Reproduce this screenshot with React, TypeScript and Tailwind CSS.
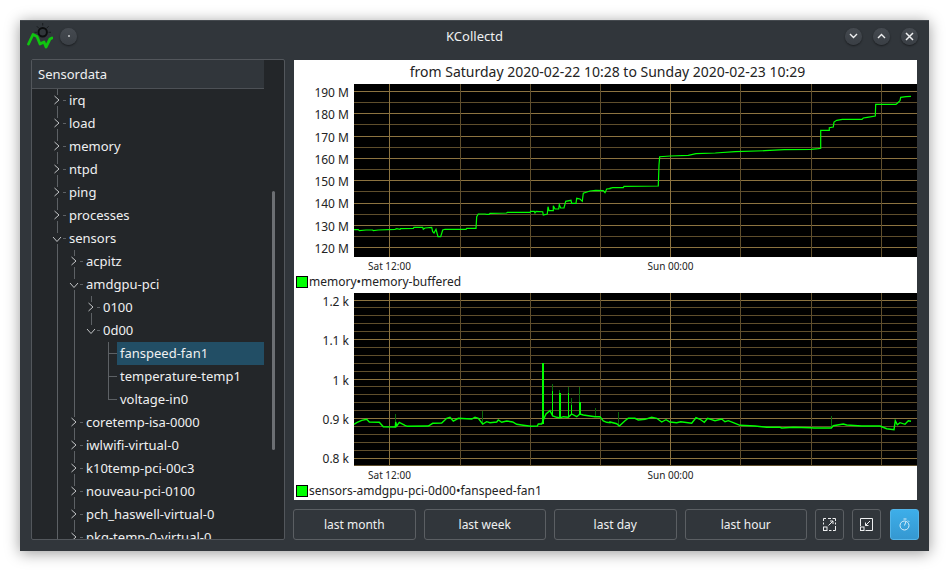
import React from "react";

const pts = (x0: number, y0: number, s: string) =>
  s.trim().split(/\s+/).map((p) => {
    const [a, b] = p.split(",").map(Number);
    return `${(x0 + a / 3).toFixed(1)},${(y0 + b / 3).toFixed(1)}`;
  }).join(" ");

const mem =
  pts(-4, -24, "192,509 205,509 208,512 228,510 248,510 250,512 265,510 315,508 320,506 330,508 332,506 370,505 372,502 398,502 400,508 405,504 425,502 428,515 432,519 438,508 444,530 452,530 458,510 465,508 528,508 530,505 558,505 560,470 565,462 585,462 590,463 597,463 600,460 650,459 652,457 720,457 722,454 733,454 735,459 738,454 758,455 760,465 772,462 774,440 777,452 790,452 790,437 795,447 806,447 808,434 812,444 822,444 827,424 843,421 845,430 858,430 860,415 870,417 877,424 880,400 900,393 917,391 940,392 945,398 950,387 960,386") +
  " " +
  pts(316, -24, "0,385 8,383 40,383 42,379 145,378 147,315 149,290 181,288 235,286 258,281 316,279 376,275 465,272 523,269 604,268 625,266 632,265 632,211 658,211 658,203 670,201 672,186 680,181 697,178 756,178 760,174 772,172 796,168 797,133 858,133 862,130 870,122 872,112 888,110 903,109");

const fan =
  pts(-4, -3, "192,403 200,398 215,391 230,388 238,396 268,397 280,410 316,411 317,396 320,408 328,397 345,406 352,409 415,408 428,400 455,399 470,385 480,382 490,393 505,385 530,386 545,387 555,382 565,385 578,402 590,395 600,398 620,396 625,390 635,397 650,393 668,396 680,403 700,406 722,409 742,408 745,402 755,402 760,390 768,372 780,362 788,378 800,382 810,384 820,380 835,382 845,372 860,380 870,372 880,375 915,380 930,380 940,393 950,397 960,398") +
  " " +
  pts(316, -3, "0,396 20,401 28,408 45,392 55,385 75,385 85,390 105,388 125,382 140,385 155,396 168,389 180,396 200,398 212,395 245,400 258,383 270,388 283,397 293,385 315,392 335,387 345,395 355,392 370,398 390,406 435,408 470,412 510,412 515,414 550,412 600,413 612,414 664,414 670,407 700,402 710,405 755,408 810,408 830,416 852,419 856,392 862,404 870,398 885,403 895,392 903,394");

const vLines: [number, boolean][] = [
  [95.5, true], [166.5, false], [236.5, false], [306.5, false], [376.5, true], [446.5, false], [517.5, false], [587.5, false],
];

const MAJOR = "#8c7340";
const MINOR = "#5f4e2c";

const brightSpikes: [number, number, number, number][] = [
  [759, 218, 402, 2], [787, 302, 378, 1], [809, 308, 382, 2], [835, 308, 380, 1], [844, 345, 372, 1], [870, 337, 375, 2],
];
const darkSpikes: [number, number, number][] = [
  [316, 372, 396], [577, 362, 402], [787, 282, 302], [809, 300, 308], [835, 290, 308], [844, 323, 345], [868, 290, 337], [916, 354, 380],
];
const darkSpikes2: [number, number, number][] = [[25, 366, 405], [664, 378, 414]];

function Chart({ hLines, bottom, plotH, yLabels, trace, spikes, labelY, traceWidth }: {
  hLines: [number, boolean][];
  bottom?: boolean;
  plotH: number;
  yLabels: [string, number][];
  trace: string;
  spikes?: React.ReactNode;
  labelY: number;
  traceWidth: number;
}) {
  return (
    <svg width="623" height="191" viewBox="0 0 623 191" className="block shrink-0">
      <rect x="60" y="0" width="563" height={plotH} fill="#000" />
      <g shapeRendering="crispEdges" strokeWidth="1">
        {hLines.map(([y, major], i) => (
          <line key={i} x1="60" x2="623" y1={y} y2={y} stroke={major ? MAJOR : MINOR} />
        ))}
        {vLines.map(([x, major], i) => (
          <line key={i} x1={x} x2={x} y1="0" y2={plotH} stroke={major ? MAJOR : MINOR} />
        ))}
        {bottom && <line x1="60" x2="623" y1={plotH - 0.5} y2={plotH - 0.5} stroke={MINOR} />}
      </g>
      {spikes}
      <polyline points={trace} fill="none" stroke="#00ff00" strokeWidth={traceWidth} strokeLinejoin="miter" />
      <g fill="#232323" fontSize="12" textAnchor="end">
        {yLabels.map(([t, y]) => (
          <text key={t} x="55" y={y}>{t}</text>
        ))}
      </g>
      <g fill="#232323" fontSize="10" textAnchor="middle">
        <text x="95.5" y={labelY}>Sat 12:00</text>
        <text x="376.5" y={labelY}>Sun 00:00</text>
      </g>
    </svg>
  );
}

const memH: [number, boolean][] = [];
for (let i = 0; i < 8; i++) {
  memH.push([Math.floor(7.5 + 22.3 * i) + 0.5, true]);
  if (i < 7) memH.push([Math.floor(18.6 + 22.3 * i) + 0.5, false]);
}
const fanH: [number, boolean][] = [];
for (let i = 0; i <= 20; i++) {
  fanH.push([Math.floor(7 + 7.9 * i) + 0.5, i % 5 === 0]);
}

function FanSpikes() {
  return (
    <g shapeRendering="crispEdges">
      {darkSpikes.map(([x, a, b], i) => (
        <line key={i} x1={-4 + x / 3} x2={-4 + x / 3} y1={-3 + a / 3} y2={-3 + b / 3} stroke="#0a6a0a" />
      ))}
      {darkSpikes2.map(([x, a, b], i) => (
        <line key={i} x1={316 + x / 3} x2={316 + x / 3} y1={-3 + a / 3} y2={-3 + b / 3} stroke="#0a6a0a" />
      ))}
      {brightSpikes.map(([x, a, b, w], i) => (
        <line key={i} x1={-4 + x / 3} x2={-4 + x / 3} y1={-3 + a / 3} y2={-3 + b / 3} stroke="#00ff00" strokeWidth={w} />
      ))}
    </g>
  );
}

function Legend({ text, h }: { text: string; h: string }) {
  return (
    <div className={`flex items-start pl-[2px] shrink-0 ${h}`}>
      <span className="w-[12px] h-[12px] mt-px bg-[#00ff00] border border-black shrink-0" />
      <span className="ml-px text-[12px] leading-[14px] text-[#232323] whitespace-nowrap">{text}</span>
    </div>
  );
}

type Kind = "closed" | "open" | "leaf" | "last";

const LINE = "bg-[#5d6165]";

function Row({ label, guides, kind, selected }: { label: string; guides: boolean[]; kind: Kind; selected?: boolean }) {
  const isFolder = kind === "closed" || kind === "open";
  return (
    <div className="flex h-[23px] shrink-0 w-[232px]">
      <div className="w-[17px] shrink-0" />
      {guides.map((g, i) => (
        <div key={i} className="w-[17px] shrink-0 flex justify-center">
          {g && <div className={`w-px h-full ${LINE}`} />}
        </div>
      ))}
      <div className="w-[17px] shrink-0 relative">
        {isFolder ? (
          <>
            <div className={`absolute left-[8px] top-0 w-px h-[6px] ${LINE}`} />
            {(kind === "closed" || label === "sensors" || label === "amdgpu-pci") && (
              <div className={`absolute left-[8px] bottom-0 w-px h-[6px] ${LINE}`} />
            )}
            <div className={`absolute left-[14px] top-[11px] w-[3px] h-px ${LINE}`} />
            {kind === "closed" ? (
              <svg width="8" height="10" viewBox="0 0 8 10" className="absolute left-[4px] top-[6px]">
                <path d="M1.5 1 L6 5 L1.5 9" fill="none" stroke="#c4c6c8" strokeWidth="1" />
              </svg>
            ) : (
              <svg width="10" height="7" viewBox="0 0 10 7" className="absolute left-[3px] top-[9px]">
                <path d="M1 1 L5 5.5 L9 1" fill="none" stroke="#c4c6c8" strokeWidth="1" />
              </svg>
            )}
          </>
        ) : (
          <>
            <div className={`absolute left-[8px] top-0 w-px ${kind === "last" ? "h-[12px]" : "h-full"} ${LINE}`} />
            <div className={`absolute left-[8px] top-[11px] w-[9px] h-px ${LINE}`} />
          </>
        )}
      </div>
      <div className={`flex-1 min-w-0 pl-[3px] flex items-center text-[13px] text-[#eff0f1] whitespace-nowrap ${selected ? "bg-[#224e65]" : ""}`}>
        {label}
      </div>
    </div>
  );
}

function RoundBtn({ children }: { children: React.ReactNode }) {
  return (
    <div className="w-[17px] h-[17px] rounded-full bg-gradient-to-b from-[#454a50] to-[#3a3f45] shadow-[0_1px_2px_rgba(0,0,0,0.5)] flex items-center justify-center">
      {children}
    </div>
  );
}

function TextBtn({ label }: { label: string }) {
  return (
    <div className="flex-1 h-[31px] pt-px rounded-[3px] border border-[#5b5f63] flex items-center justify-center text-[12px] text-[#eff0f1]">
      {label}
    </div>
  );
}

function IconBtn({ children, active }: { children: React.ReactNode; active?: boolean }) {
  return (
    <div className={`w-[29px] h-[31px] shrink-0 rounded-[3px] border flex items-center justify-center ${active ? "ml-px border-[#53b4e8] bg-gradient-to-b from-[#3daee9] to-[#3598d1]" : "border-[#5b5f63]"}`}>
      {children}
    </div>
  );
}

export default function App() {
  return (
    <div className="w-[949px] h-[571px] bg-white pl-5 pt-5 overflow-hidden font-['Noto_Sans',sans-serif]">
      <div className="w-[909px] h-[531px] bg-[#31363b] border-t border-[#454a4f] shadow-[0_2px_14px_rgba(0,0,0,0.4)] flex flex-col">
        <div className="h-[30px] mb-[8px] shrink-0 flex items-center pl-[7px] pr-[11px]">
          <svg width="26" height="26" viewBox="0 0 26 26" className="shrink-0">
            <g stroke="#17191b" strokeWidth="1" opacity="0.85">
              <path d="M15.7 0v2.5M7.5 9.3h2.5M21.5 9.3h2.5M9.8 3.2l2 2M21.7 3.2l-2 2" />
            </g>
            <circle cx="15.7" cy="9.3" r="4.2" fill="none" stroke="#0c0d0e" strokeWidth="2" />
            <path d="M1.5 21 L6 11.5 L10 13.5 L13 21 L17 19 L19 24 L23 16 L25 15" fill="none" stroke="#10c410" strokeWidth="2.8" strokeLinejoin="round" strokeLinecap="round" />
          </svg>
          <div className="ml-[7px]">
            <RoundBtn>
              <div className="w-[2px] h-[2px] bg-[#a5a8ab]" />
            </RoundBtn>
          </div>
          <div className="flex-1 pt-px text-center text-[13px] text-[#eff0f1] pl-[27px]">KCollectd</div>
          <div className="flex gap-[11px]">
            <RoundBtn>
              <svg width="9" height="6" viewBox="0 0 9 6"><path d="M1 1 L4.5 4.5 L8 1" fill="none" stroke="#eff0f1" strokeWidth="1.4" /></svg>
            </RoundBtn>
            <RoundBtn>
              <svg width="9" height="6" viewBox="0 0 9 6"><path d="M1 5 L4.5 1.5 L8 5" fill="none" stroke="#eff0f1" strokeWidth="1.4" /></svg>
            </RoundBtn>
            <RoundBtn>
              <svg width="9" height="9" viewBox="0 0 9 9"><path d="M1 1 L8 8 M8 1 L1 8" fill="none" stroke="#eff0f1" strokeWidth="1.5" /></svg>
            </RoundBtn>
          </div>
        </div>

        <div className="flex pl-[11px] pr-[10px] h-[482px]">
          <div className="w-[254px] h-[481px] shrink-0 rounded-[2px] border border-[#53575c] bg-[#232629] overflow-hidden relative">
            <div className="w-[232px] h-[29px] pt-px bg-[#31363b] border-b border-[#4d5156] flex items-center pl-[6px] text-[13px] text-[#eff0f1]">
              Sensordata
            </div>
            <div className="flex flex-col">
              <Row label="irq" guides={[]} kind="closed" />
              <Row label="load" guides={[]} kind="closed" />
              <Row label="memory" guides={[]} kind="closed" />
              <Row label="ntpd" guides={[]} kind="closed" />
              <Row label="ping" guides={[]} kind="closed" />
              <Row label="processes" guides={[]} kind="closed" />
              <Row label="sensors" guides={[]} kind="open" />
              <Row label="acpitz" guides={[true]} kind="closed" />
              <Row label="amdgpu-pci" guides={[true]} kind="open" />
              <Row label="0100" guides={[true, true]} kind="closed" />
              <Row label="0d00" guides={[true, true]} kind="open" />
              <Row label="fanspeed-fan1" guides={[true, true, false]} kind="leaf" selected />
              <Row label="temperature-temp1" guides={[true, true, false]} kind="leaf" />
              <Row label="voltage-in0" guides={[true, true, false]} kind="last" />
              <Row label="coretemp-isa-0000" guides={[true]} kind="closed" />
              <Row label="iwlwifi-virtual-0" guides={[true]} kind="closed" />
              <Row label="k10temp-pci-00c3" guides={[true]} kind="closed" />
              <Row label="nouveau-pci-0100" guides={[true]} kind="closed" />
              <Row label="pch_haswell-virtual-0" guides={[true]} kind="closed" />
              <Row label="pkg-temp-0-virtual-0" guides={[true]} kind="closed" />
            </div>
            <div className="absolute left-[240px] top-[131px] w-[3px] h-[259px] rounded-full bg-[#6c6f73]" />
          </div>

          <div className="ml-[8px] flex-1 min-w-0 flex flex-col">
            <div className="ml-px w-[623px] h-[440px] bg-white mt-px flex flex-col">
              <div className="h-[24px] pb-[2px] pl-[4px] shrink-0 flex items-center justify-center text-[14px] text-[#232323] whitespace-nowrap">
                from Saturday 2020-02-22 10:28 to Sunday 2020-02-23 10:29
              </div>
              <Chart
                hLines={memH}
                plotH={173}
                labelY={186}
                trace={mem}
                traceWidth={1.2}
                yLabels={[["190 M", 13], ["180 M", 35], ["170 M", 58], ["160 M", 80], ["150 M", 102], ["140 M", 124], ["130 M", 147], ["120 M", 169]]}
              />
              <Legend text="memory•memory-buffered" h="h-[18px]" />
              <Chart
                hLines={fanH}
                bottom
                plotH={173}
                labelY={186}
                trace={fan}
                traceWidth={1.4}
                spikes={<FanSpikes />}
                yLabels={[["1.2 k", 13], ["1.1 k", 52], ["1 k", 92], ["0.9 k", 131], ["0.8 k", 170]]}
              />
              <Legend text="sensors-amdgpu-pci-0d00•fanspeed-fan1" h="h-[16px]" />
            </div>
            <div className="mt-[9px] flex items-center gap-2">
              <div className="flex-1 flex gap-2">
                <TextBtn label="last month" />
                <TextBtn label="last week" />
                <TextBtn label="last day" />
                <TextBtn label="last hour" />
              </div>
              <IconBtn>
                <svg width="13" height="13" viewBox="0 0 13 13" fill="none" stroke="#eff0f1" strokeWidth="1">
                  <rect x="0.5" y="9" width="3.5" height="3.5" />
                  <path d="M0.5 6.5v-2M0.5 3V0.5H3M5 0.5h3M9.5 0.5h3V3M12.5 4.5v2M12.5 8v4.5H10M8.5 12.5H6" />
                  <path d="M5.5 7.5L10 3M7 3h3v3" />
                </svg>
              </IconBtn>
              <IconBtn>
                <svg width="13" height="13" viewBox="0 0 13 13" fill="none" stroke="#eff0f1" strokeWidth="1">
                  <rect x="0.5" y="9" width="3.5" height="3.5" />
                  <path d="M0.5 8V0.5H12.5V12.5H5.5" />
                  <path d="M10 3L5.5 7.5M5.5 4.5v3h3" />
                </svg>
              </IconBtn>
              <IconBtn active>
                <svg width="12" height="13" viewBox="0 0 12 13" fill="none" stroke="#d9eefa" strokeWidth="1">
                  <circle cx="5.5" cy="7.5" r="4.5" />
                  <path d="M5.5 7.5L7 3.5M4.5 1h3M9 2.6l1.2 1.2" />
                </svg>
              </IconBtn>
            </div>
          </div>
        </div>
      </div>
    </div>
  );
}
